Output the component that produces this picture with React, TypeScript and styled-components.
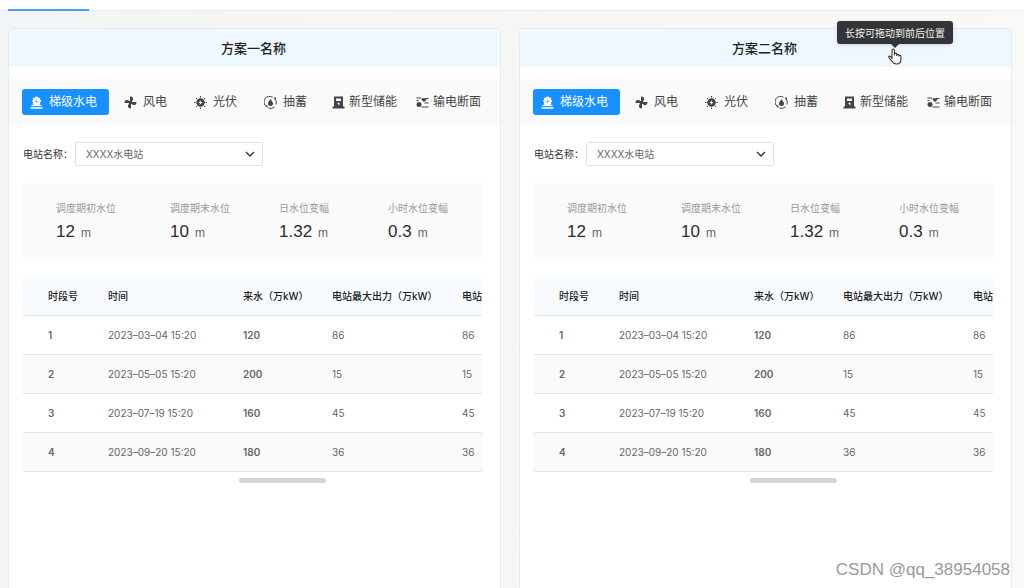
import React from "react";
import styled, { createGlobalStyle, css } from "styled-components";

const GlobalStyle = createGlobalStyle`
  * { box-sizing: border-box; }
  body {
    margin: 0;
    font-family: Inter, "Noto Sans CJK SC", sans-serif;
    font-size: 10px;
    line-height: 16px;
    color: #333;
  }
  button, select { font: inherit; color: inherit; }
`;

const Page = styled.div`
  position: relative;
  display: flex;
  flex-direction: column;
  min-height: 100vh;
  overflow: hidden;
  background: linear-gradient(100deg, #f3f4f5 0%, #f6f6f4 45%, #f9faf8 100%);
`;

const TopBar = styled.nav`
  display: flex;
  height: 11px;
  padding-left: 8px;
  background: #fff;
  border-bottom: 1px solid #ebebeb;
`;

const ActiveMark = styled.span`
  width: 81px;
  height: 2px;
  margin-top: 9px;
  background: #4a9df0;
`;

const Board = styled.main`
  flex: 1;
  display: grid;
  grid-template-columns: repeat(2, minmax(0, 1fr));
  gap: 18px;
  padding: 17px 12px 0 8px;
`;

const Panel = styled.section`
  display: flex;
  flex-direction: column;
  background: #fff;
  border: 1px solid #e6ebef;
  border-bottom: 0;
  border-radius: 4px 4px 0 0;
`;

const PanelHeader = styled.header`
  position: relative;
  display: flex;
  align-items: center;
  justify-content: center;
  height: 38px;
  padding-right: 2px;
  background: #f0f8ff;
  border-radius: 3px 3px 0 0;
`;

const Title = styled.h2`
  margin: 0;
  font-size: 13px;
  line-height: 20px;
  font-weight: 500;
  color: #222;
`;

const DragHint = styled.div`
  position: absolute;
  top: -8px;
  right: 58px;
  display: flex;
  flex-direction: column;
  align-items: center;
`;

const Tooltip = styled.div`
  padding: 4px 8px 3px;
  border-radius: 3px;
  background: #333538;
  color: #f2f2f2;
  white-space: nowrap;
  box-shadow: 0 1px 4px rgba(0, 0, 0, 0.15);
`;

const Tabs = styled.div`
  display: flex;
  align-items: center;
  gap: 7px;
  height: 46px;
  margin-top: 12px;
  padding: 0 13px;
  background: #fafafa;
`;

const Tab = styled.button<{ $active?: boolean; $compact?: boolean }>`
  display: flex;
  align-items: center;
  gap: ${(p) => (p.$compact ? 4 : 6)}px;
  height: 26px;
  padding: ${(p) => (p.$compact ? "0 6px" : "0 12px 0 8px")};
  border: 0;
  border-radius: 3px;
  background: transparent;
  color: #444;
  font-size: 12px;
  line-height: 18px;
  white-space: nowrap;
  ${(p) =>
    p.$active &&
    css`
      background: #1890ff;
      color: #fff;
    `}
  svg { flex: none; display: block; }
`;

const Content = styled.div`
  display: flex;
  flex-direction: column;
  padding: 17px 18px 0 14px;
`;

const Field = styled.label`
  display: flex;
  align-items: center;
  gap: 2px;
`;

const SelectBox = styled.span`
  display: grid;
  align-items: center;
  width: 188px;
  > * { grid-area: 1 / 1; }
  svg { justify-self: end; margin-right: 8px; pointer-events: none; }
`;

const Select = styled.select`
  appearance: none;
  width: 100%;
  height: 24px;
  padding: 0 24px 0 10px;
  border: 1px solid #e2e2e2;
  border-radius: 2px;
  background: #fff;
  color: #666;
`;

const Stats = styled.dl`
  display: grid;
  grid-template-columns: 114fr 109fr 109fr 94fr;
  align-items: center;
  height: 76px;
  margin: 17px 0 18px;
  padding: 2px 0 0 33px;
  background: #fafafa;
`;

const StatName = styled.dt`
  color: #999;
  white-space: nowrap;
`;

const StatValue = styled.dd`
  margin: 4px 0 0;
  font-family: "Liberation Sans", sans-serif;
  font-size: 17px;
  line-height: 24px;
  color: #2c2c2c;
  small {
    margin-left: 6px;
    font-size: 12px;
    color: #666;
  }
`;

const Table = styled.table`
  width: 100%;
  table-layout: fixed;
  border-collapse: separate;
  border-spacing: 0;
  text-align: left;
  th, td {
    height: 39px;
    padding: 0;
    border-bottom: 1px solid #e4e5e7;
    white-space: nowrap;
  }
  th:first-child, td:first-child { padding-left: 25px; }
  th {
    background: #f7fbff;
    font-weight: 500;
    color: #222;
  }
  td { color: #666; }
  tbody tr:nth-child(even) { background: #fafafa; }
`;

const Column = styled.col<{ $width?: number }>`
  width: ${(p) => (p.$width ? `${p.$width}px` : "auto")};
`;

const StrongCell = styled.td`
  font-weight: 600;
`;

const ScrollThumb = styled.div`
  align-self: center;
  width: 87px;
  height: 5px;
  margin-top: 6px;
  margin-left: 60px;
  border-radius: 3px;
  background: #d5d5d5;
`;

const Watermark = styled.div`
  position: absolute;
  right: 14px;
  bottom: 6px;
  font-family: "Liberation Sans", sans-serif;
  font-size: 17px;
  line-height: 24px;
  color: #999;
`;

const Icon = ({ children }: { children: React.ReactNode }) => (
  <svg width="13" height="13" viewBox="0 0 26 26" fill="none" stroke="currentColor" aria-hidden="true">
    {children}
  </svg>
);

const HydroIcon = () => (
  <Icon>
    <path d="M13 1v18M5 10h17M6.500 4l13 13M19.500 4l-13 13" strokeWidth="4" />
    <circle cx="13" cy="10.500" r="7.500" fill="currentColor" stroke="none" />
    <path d="M14 6l-4 5h3l-1 4 4-5h-3z" fill="#1890ff" stroke="none" />
    <path d="M3 19h20" strokeWidth="2.500" />
    <path d="M1 24h24" strokeWidth="3" />
  </Icon>
);

const WindIcon = () => (
  <Icon>
    <g fill="currentColor" stroke="none">
      <path d="M12 14V1c5 0 7 3 6 6-1 2-2 3-2 7z" />
      <path d="M12 12h13c0 5-3 7-6 6-2-1-3-2-7-2z" />
      <path d="M14 12v13c-5 0-7-3-6-6 1-2 2-3 2-7z" />
      <path d="M14 14H1c0-5 3-7 6-6 2 1 3 2 7 2z" />
    </g>
  </Icon>
);

const SolarIcon = () => (
  <Icon>
    <circle cx="13" cy="13" r="8.500" fill="currentColor" stroke="none" />
    <path d="M13 0v3M13 23v3M0 13h3M23 13h3M4 4l2 2M20 20l2 2M4 22l2-2M20 6l2-2" strokeWidth="2" />
    <path d="M14 8l-5 6h3l-1 4 6-6h-4z" fill="#fafafa" stroke="none" />
  </Icon>
);

const PumpIcon = () => (
  <Icon>
    <path d="M17 2.500A11 11 0 0 0 5 21M9 24a11 11 0 0 0 12-2M24 17A11 11 0 0 0 21 5" strokeWidth="2" />
    <path d="M19 3h5v5zM2 19h5v5z" fill="currentColor" stroke="none" />
    <path d="M13 6c2 4 5 6 5 9a5 5 0 0 1-10 0c0-3 3-5 5-9z" fill="currentColor" stroke="none" />
  </Icon>
);

const StorageIcon = () => (
  <Icon>
    <path
      fillRule="evenodd"
      d="M4 1h18v20h3v4H1v-4h3zM8 5v5h10V5zM14 12l-4 4h3v3l4-4h-3z"
      fill="currentColor"
      stroke="none"
    />
  </Icon>
);

const GridIcon = () => (
  <Icon>
    <path d="M1 4h9M1 9h4M20 5h5M17 14h8M11 22h14" strokeWidth="2.400" />
    <circle cx="6" cy="17" r="5" fill="currentColor" stroke="none" />
    <path d="M11 5c2-2 4-1 5 0 1-1 4-2 5 0 1 3-3 5-5 7-2-2-6-4-5-7z" fill="currentColor" stroke="none" />
  </Icon>
);

const Chevron = () => (
  <svg width="10" height="10" viewBox="0 0 10 10" fill="none" stroke="#333" strokeWidth="1.3" aria-hidden="true">
    <path d="M1 3l4 4 4-4" />
  </svg>
);

const TooltipArrow = () => (
  <svg width="8" height="4" viewBox="0 0 8 4" aria-hidden="true">
    <path d="M0 0h8L4 4z" fill="#333538" />
  </svg>
);

const HandCursor = () => (
  <svg width="16" height="17" viewBox="0 0 16 17" fill="#fff" stroke="#333" strokeWidth="1.1" strokeLinejoin="round" aria-hidden="true">
    <path d="M5 10.500V2.200a1.200 1.200 0 0 1 2.400 0V7l.1-.9a1.100 1.100 0 0 1 2.200.3V7.500a1.100 1.100 0 0 1 2.200 0v.7a1 1 0 0 1 2 .2v3c0 3-1.800 4.600-4.400 4.600-2.300 0-3.500-1-4.500-2.700L1.800 9.500c-.5-1 .7-1.900 1.600-1.100z" />
  </svg>
);

const tabs = [
  { name: "梯级水电", icon: <HydroIcon />, active: true },
  { name: "风电", icon: <WindIcon /> },
  { name: "光伏", icon: <SolarIcon /> },
  { name: "抽蓄", icon: <PumpIcon /> },
  { name: "新型储能", icon: <StorageIcon />, compact: true },
  { name: "输电断面", icon: <GridIcon />, compact: true },
];

const stats = [
  ["调度期初水位", "12"],
  ["调度期末水位", "10"],
  ["日水位变幅", "1.32"],
  ["小时水位变幅", "0.3"],
];

const columns = [
  { heading: "时段号", width: 85 },
  { heading: "时间", width: 135 },
  { heading: "来水（万kW）", width: 89 },
  { heading: "电站最大出力（万kW）", width: 130 },
  { heading: "电站" },
];

const periods = [
  { id: 1, time: "2023–03–04 15:20", inflow: 120, output: 86 },
  { id: 2, time: "2023–05–05 15:20", inflow: 200, output: 15 },
  { id: 3, time: "2023–07–19 15:20", inflow: 160, output: 45 },
  { id: 4, time: "2023–09–20 15:20", inflow: 180, output: 36 },
];

function PlanPanel({ title, hint }: { title: string; hint?: string }) {
  return (
    <Panel>
      <PanelHeader>
        <Title>{title}</Title>
        {hint && (
          <DragHint>
            <Tooltip role="tooltip">{hint}</Tooltip>
            <TooltipArrow />
            <HandCursor />
          </DragHint>
        )}
      </PanelHeader>
      <Tabs>
        {tabs.map((t) => (
          <Tab key={t.name} type="button" $active={t.active} $compact={t.compact}>
            {t.icon}
            {t.name}
          </Tab>
        ))}
      </Tabs>
      <Content>
        <Field>
          电站名称：
          <SelectBox>
            <Select>
              <option>XXXX水电站</option>
            </Select>
            <Chevron />
          </SelectBox>
        </Field>
        <Stats>
          {stats.map(([name, value]) => (
            <div key={name}>
              <StatName>{name}</StatName>
              <StatValue>
                {value}
                <small>m</small>
              </StatValue>
            </div>
          ))}
        </Stats>
        <Table>
          <colgroup>
            {columns.map((c) => (
              <Column key={c.heading} $width={c.width} />
            ))}
          </colgroup>
          <thead>
            <tr>
              {columns.map((c) => (
                <th key={c.heading}>{c.heading}</th>
              ))}
            </tr>
          </thead>
          <tbody>
            {periods.map((p) => (
              <tr key={p.id}>
                <StrongCell>{p.id}</StrongCell>
                <td>{p.time}</td>
                <StrongCell>{p.inflow}</StrongCell>
                <td>{p.output}</td>
                <td>{p.output}</td>
              </tr>
            ))}
          </tbody>
        </Table>
        <ScrollThumb />
      </Content>
    </Panel>
  );
}

export default function App() {
  return (
    <Page>
      <GlobalStyle />
      <TopBar>
        <ActiveMark />
      </TopBar>
      <Board>
        <PlanPanel title="方案一名称" />
        <PlanPanel title="方案二名称" hint="长按可拖动到前后位置" />
      </Board>
      <Watermark>CSDN @qq_38954058</Watermark>
    </Page>
  );
}
